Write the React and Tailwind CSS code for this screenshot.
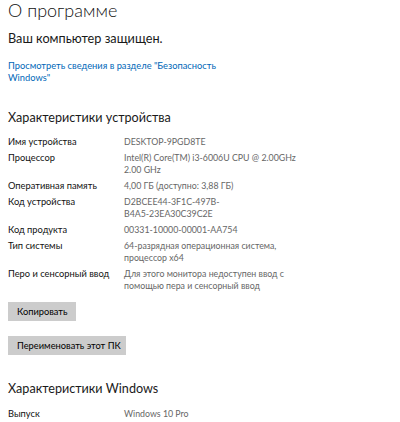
export default function App() {
  const rows = [
    ["Имя устройства", ["DESKTOP-9PGD8TE"]],
    ["Процессор", ["Intel(R) Core(TM) i3-6006U CPU @ 2.00GHz", "2.00 GHz"]],
    ["Оперативная память", ["4,00 ГБ (доступно: 3,88 ГБ)"]],
    ["Код устройства", ["D2BCEE44-3F1C-497B-", "B4A5-23EA30C39C2E"]],
    ["Код продукта", ["00331-10000-00001-AA754"]],
    ["Тип системы", ["64-разрядная операционная система,", "процессор x64"]],
    ["Перо и сенсорный ввод", ["Для этого монитора недоступен ввод с", "помощью пера и сенсорный ввод"]],
  ];
  return (
    <div className="w-[400px] h-[422px] overflow-hidden bg-white px-2 text-black font-['Lato',sans-serif]">
      <div className="text-[18px] font-light leading-[20px] text-[#111]">О программе</div>
      <div className="text-[12.7px] leading-[16px] mt-[10px] text-[#1a1a1a]">Ваш компьютер защищен.</div>
      <div className="text-[9.3px] leading-[12px] mt-[14px] text-[#0067b8]">
        <div>Просмотреть сведения в разделе "Безопасность</div>
        <div>Windows"</div>
      </div>
      <div className="text-[12.6px] leading-[16px] mt-[26px] text-[#1a1a1a]">Характеристики устройства</div>
      <div className="mt-[10px] flex flex-col gap-[4px]">
        {rows.map(([k, v]) => (
          <div key={k} className="flex leading-[12px]">
            <div className="w-[116px] shrink-0 text-[9.3px] text-[#111]">{k}</div>
            <div className="text-[8.8px] text-[#666]">
              {v.map((l) => (
                <div key={l}>{l}</div>
              ))}
            </div>
          </div>
        ))}
      </div>
      <div className="mt-[10px] flex flex-col items-start gap-[15px]">
        <button className="bg-[#cccccc] w-[68px] h-[19px] pl-[9px] text-left text-[9.3px] leading-[19px] text-black">Копировать</button>
        <button className="bg-[#cccccc] w-[118px] h-[19px] pl-[9px] text-left text-[9.3px] leading-[19px] text-black">Переименовать этот ПК</button>
      </div>
      <div className="text-[12.6px] leading-[16px] mt-[26px] text-[#1a1a1a]">Характеристики Windows</div>
      <div className="mt-[11px] flex leading-[12px]">
        <div className="w-[116px] shrink-0 text-[9.3px] text-[#111]">Выпуск</div>
        <div className="text-[8.8px] text-[#666]">Windows 10 Pro</div>
      </div>
    </div>
  );
}
